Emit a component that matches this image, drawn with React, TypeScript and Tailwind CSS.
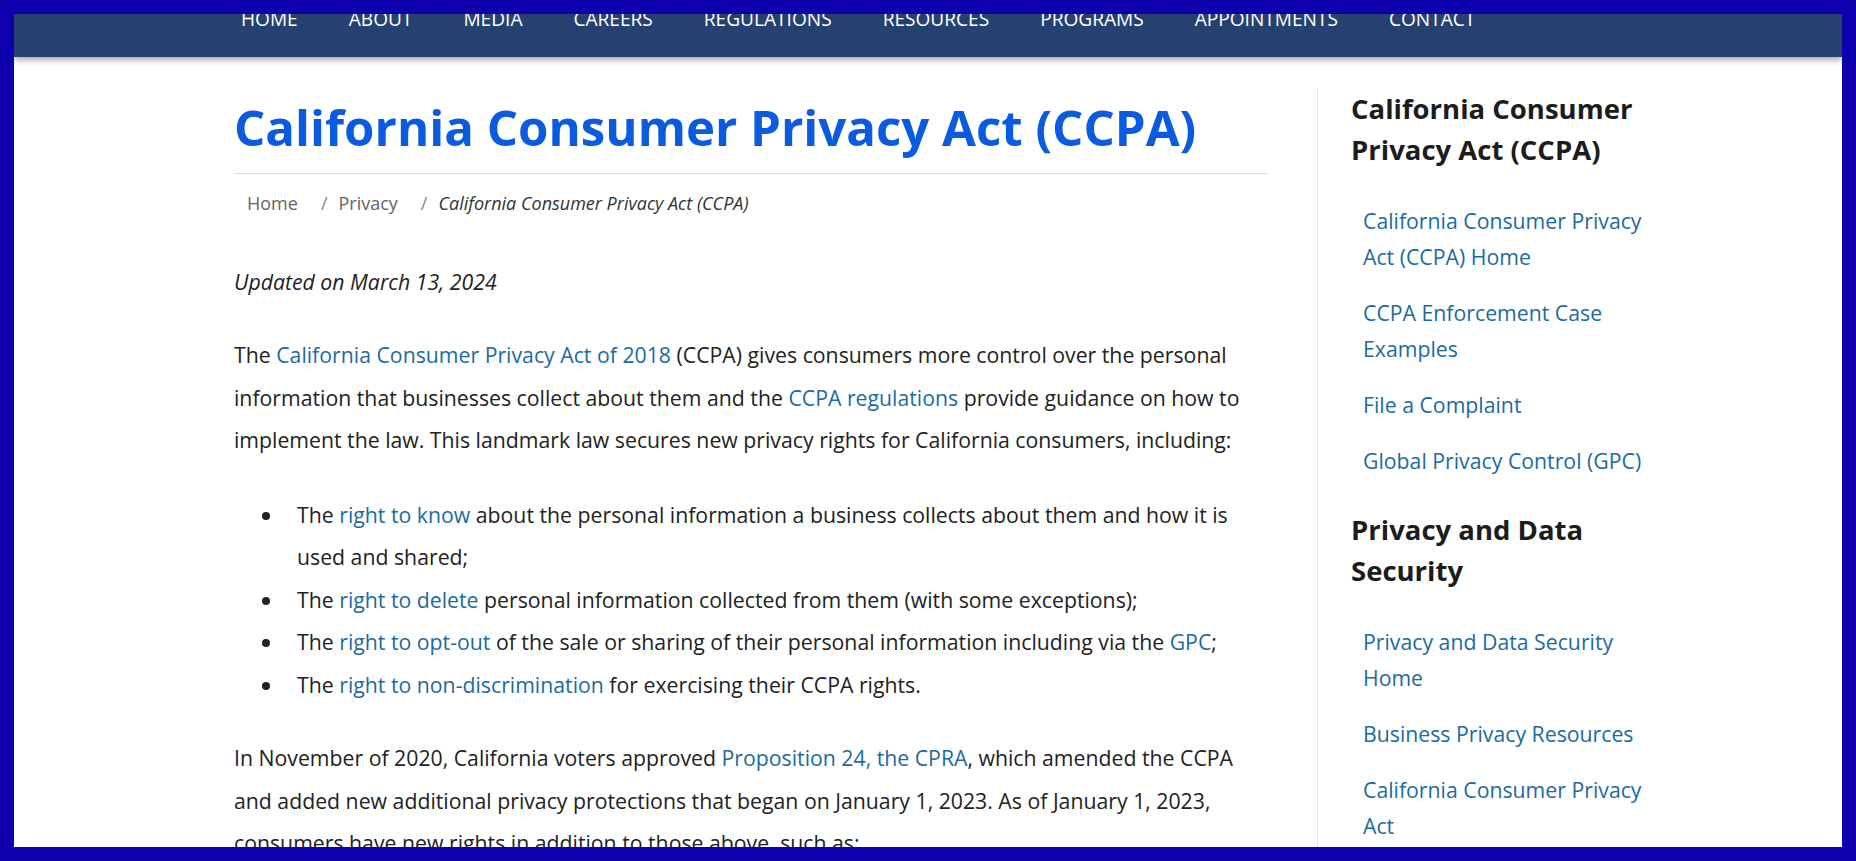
import React from "react";

const navItems = ["Home", "About", "Media", "Careers", "Regulations", "Resources", "Programs", "Appointments", "Contact"];

const linkCls = "text-[#1b6ba0]";

function Bullet({ children }: { children: React.ReactNode }) {
  return (
    <li className="flex">
      <span className="w-[63px] shrink-0 pl-[28px] pt-[18px]">
        <span className="block h-2 w-2 rounded-full bg-[#222]" />
      </span>
      <span className="flex-1">{children}</span>
    </li>
  );
}

function SideLink({ children }: { children: React.ReactNode }) {
  return (
    <li className="py-[10px] pl-[12px]">
      <a className={`${linkCls} block text-[21.25px] leading-[36px]`}>{children}</a>
    </li>
  );
}

export default function App() {
  return (
    <div className="h-[861px] w-full bg-[#0f00ad] p-[14px] font-['Open_Sans',sans-serif]">
      <div className="h-full w-full overflow-hidden bg-white">
        <header className="relative z-10 h-[43px] overflow-hidden bg-[#25416f] shadow-[0_3px_6px_rgba(0,0,0,0.35)]">
          <ul className="-mt-[7px] flex gap-[51px] pl-[227px] text-[19.1px] uppercase leading-6 text-white">
            {navItems.map((n) => (
              <li key={n}>{n}</li>
            ))}
          </ul>
        </header>

        <div className="mt-[31px] flex">
          <main className="ml-[220px] w-[1034px] shrink-0 text-[21.25px] leading-[42.5px] text-[#222]">
            <h1 className="border-b border-[#dedede] pb-[17px] pt-[10px] text-[49.2px] font-bold leading-[57.6px] text-[#0a5bdf]">
              California Consumer Privacy Act (CCPA)
            </h1>
            <nav className="mt-4 flex pl-[13px] text-[18px] leading-[27px]">
              <span className="text-[#666]">Home</span>
              <span className="ml-[23px] mr-[11px] text-[#888]">/</span>
              <span className="text-[#666]">Privacy</span>
              <span className="ml-[23px] mr-[11px] text-[#888]">/</span>
              <span className="italic text-[#333]">California Consumer Privacy Act (CCPA)</span>
            </nav>
            <p className="mt-[44px] italic">Updated on March 13, 2024</p>
            <p className="mt-[31px]">
              The <a className={linkCls}>California Consumer Privacy Act of 2018</a> (CCPA) gives consumers more control over the
              personal information that businesses collect about them and the <a className={linkCls}>CCPA regulations</a> provide
              guidance on how to implement the law. This landmark law secures new privacy rights for California consumers, including:
            </p>
            <ul className="mt-[32px]">
              <Bullet>
                The <a className={linkCls}>right to know</a> about the personal information a business collects about them and how it is
                used and shared;
              </Bullet>
              <Bullet>
                The <a className={linkCls}>right to delete</a> personal information collected from them (with some exceptions);
              </Bullet>
              <Bullet>
                The <a className={linkCls}>right to opt-out</a> of the sale or sharing of their personal information including via the{" "}
                <a className={linkCls}>GPC</a>;
              </Bullet>
              <Bullet>
                The <a className={linkCls}>right to non-discrimination</a> for exercising their CCPA rights.
              </Bullet>
            </ul>
            <p className="mt-[31px]">
              In November of 2020, California voters approved <a className={linkCls}>Proposition 24, the CPRA</a>, which amended the CCPA
              and added new additional privacy protections that began on January 1, 2023. As of January 1, 2023, consumers have new rights
              in addition to those above, such as:
            </p>
          </main>

          <aside className="ml-[49px] min-h-[900px] border-l border-[#e3e3e3] pl-[33px]">
            <div className="w-[300px]">
              <h2 className="text-[27.5px] font-bold leading-[41px] text-[#1c1c1c]">California Consumer Privacy Act (CCPA)</h2>
              <ul className="mt-[23px]">
                <SideLink>California Consumer Privacy Act (CCPA) Home</SideLink>
                <SideLink>CCPA Enforcement Case Examples</SideLink>
                <SideLink>File a Complaint</SideLink>
                <SideLink>Global Privacy Control (GPC)</SideLink>
              </ul>
              <h2 className="mt-[20px] text-[27.5px] font-bold leading-[41px] text-[#1c1c1c]">Privacy and Data Security</h2>
              <ul className="mt-[23px]">
                <SideLink>Privacy and Data Security Home</SideLink>
                <SideLink>Business Privacy Resources</SideLink>
                <SideLink>California Consumer Privacy Act</SideLink>
              </ul>
            </div>
          </aside>
        </div>
      </div>
    </div>
  );
}
